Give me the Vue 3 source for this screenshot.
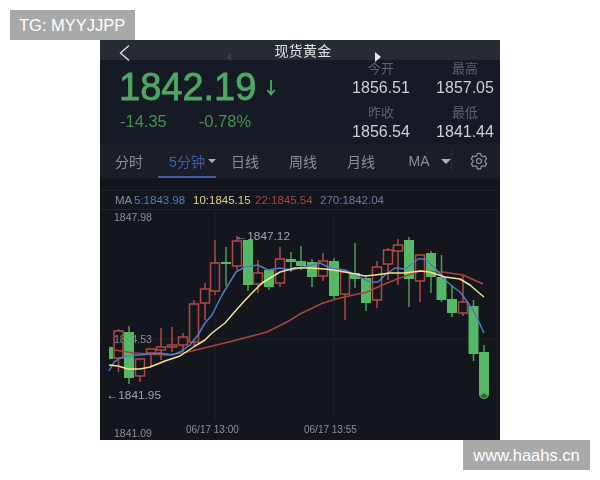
<script setup>
const tabs = ['分时', '5分钟', '日线', '周线', '月线', 'MA']

const stats = [
  { label: '今开', value: '1856.51' },
  { label: '最高', value: '1857.05' },
  { label: '昨收', value: '1856.54' },
  { label: '最低', value: '1841.44' }
]

// x, body top, body bottom, wick top, wick bottom, up?
const candles = [
  [118.5, 331, 358, 329, 372, true],
  [129, 332, 378, 326, 384, false],
  [140, 359, 376, 359, 382, true],
  [151, 349, 353, 349, 366, true],
  [161, 347, 350, 328, 360, true],
  [172, 345, 347, 327, 352, true],
  [183, 337, 345, 333, 352, true],
  [194, 304, 342, 300, 346, true],
  [205, 289, 303, 283, 320, true],
  [215, 263, 291, 240, 295, true],
  [226, 262, 264, 247, 286, false],
  [237, 241, 266, 236, 270, true],
  [248, 240, 285, 240, 291, false],
  [258, 273, 284, 260, 293, true],
  [269, 270, 287, 270, 290, false],
  [280, 259, 283, 247, 287, true],
  [291, 259, 262, 252, 272, false],
  [301, 261, 266, 246, 270, false],
  [312, 262, 277, 259, 287, false],
  [323, 261, 276, 253, 281, true],
  [334, 261, 296, 258, 299, false],
  [345, 272, 294, 270, 320, true],
  [355, 273, 279, 243, 288, false],
  [366, 278, 303, 277, 311, false],
  [377, 267, 300, 261, 308, true],
  [388, 250, 264, 248, 280, true],
  [398, 245, 251, 239, 285, true],
  [409, 240, 279, 237, 307, false],
  [420, 255, 281, 255, 302, true],
  [431, 253, 277, 251, 293, false],
  [441.5, 277, 300, 255, 302, false],
  [452, 299, 313, 285, 317, false],
  [463, 302, 313, 275, 316, true],
  [473.5, 306, 354, 300, 361, false],
  [484, 352, 394, 345, 394, false]
].map(([x, top, bottom, high, low, up]) => ({ x, top, bottom, high, low, up }))

const ma5 = '109,371 114,362 120,358 128,356 140,355 150,354 160,353 172,355 180,352 190,345 198,335 205,323 212,315 222,295 236,272 245,267 258,265 268,270 280,268 291,270 300,268 320,263 330,268 345,270 355,275 370,282 378,282 385,275 395,268 405,269 418,259 425,259 435,268 445,280 452,286 460,292 466,300 473,310 478,320 484,333'
const ma10 = '109,365 118,366 128,369 140,369 150,367 165,361 180,356 195,346 205,340 212,333 225,323 238,308 250,295 262,283 280,272 295,268 310,268 325,269 340,271 350,273 365,276 375,275 390,273 405,273 420,271 430,272 445,277 460,279 470,285 478,292 484,297'
const ma22 = '115,350 133,353 167,355 183,353 200,349 233,341 267,332 287,322 300,314 323,303 340,298 367,292 387,283 400,278 420,271 443,272 463,275 483,284'
</script>

<template>
  <div class="page">
    <div class="tag tag-top">TG: MYYJJPP</div>

    <div class="shot">
      <header class="title-bar">
        <svg class="back" width="14" height="18" viewBox="0 0 14 18">
          <path d="M12 1.5 3.5 9l8.5 7.5" fill="none" stroke="#d8dade" stroke-width="1.4" />
        </svg>
        <span class="title">现货黄金</span>
        <i class="pointer pointer-dim"></i>
        <i class="pointer pointer-light"></i>
      </header>

      <section class="quote">
        <div class="price-block">
          <div class="price-row">
            <span class="price">1842.19</span>
            <svg width="10" height="17" viewBox="0 0 10 17">
              <path d="M5 1v14M1.500 11 5 15.500 8.500 11" fill="none" stroke="#4fa761" stroke-width="1.800" />
            </svg>
          </div>
          <div class="change-row">
            <span>-14.35</span>
            <span>-0.78%</span>
          </div>
        </div>
        <div class="stats">
          <div v-for="s in stats" :key="s.label" class="stat">
            <span class="stat-label">{{ s.label }}</span>
            <span class="stat-value">{{ s.value }}</span>
          </div>
        </div>
      </section>

      <nav class="tabs">
        <div
          v-for="(t, i) in tabs"
          :key="t"
          :class="['tab', { active: i === 1 }]">
          {{ t }}
          <i v-if="i === 1 || i === 5" class="caret"></i>
        </div>
        <div class="gear">
          <svg width="18" height="18" viewBox="0 0 18 18">
            <path d="M7.300 1.500h3.400l.5 2.200 1.600.9 2.200-.7 1.700 2.900-1.700 1.500v1.800l1.700 1.500-1.700 2.900-2.200-.7-1.600.9-.5 2.200H7.300l-.5-2.200-1.600-.9-2.200.7-1.700-2.900 1.700-1.500V8.300L1.300 6.800 3 3.900l2.200.7 1.600-.9z" fill="none" stroke="#9a9ea6" stroke-width="1.100" stroke-linejoin="round" />
            <circle cx="9" cy="9" r="2.500" fill="none" stroke="#9a9ea6" stroke-width="1.100" />
          </svg>
        </div>
      </nav>

      <section class="chart">
        <div class="legend">
          <span class="legend-ma">MA</span>
          <span class="legend-5">5:1843.98</span>
          <span class="legend-10">10:1845.15</span>
          <span class="legend-22">22:1845.54</span>
          <span class="legend-270">270:1842.04</span>
        </div>
        <svg class="plot" width="400" height="230" viewBox="100 210 400 230">
          <path d="M110 339H497M215 212V420M334 212V420" stroke="#1f2229" stroke-width="1" fill="none" />
          <path d="M497.500 190V440" stroke="#1e2128" fill="none" />

          <text x="114" y="221" class="axis">1847.98</text>
          <text x="114" y="343" class="axis">1844.53</text>
          <text x="114" y="437" class="axis">1841.09</text>
          <text x="186" y="433" class="axis small">06/17 13:00</text>
          <text x="304" y="433" class="axis small">06/17 13:55</text>

          <rect x="109" y="347" width="4" height="12" fill="#53b665" />
          <g v-for="c in candles" :key="c.x">
            <template v-if="c.up">
              <path :d="`M${c.x} ${c.high}V${c.top}M${c.x} ${c.bottom}V${c.low}`" stroke="#b04a46" stroke-width="1.500" />
              <rect :x="c.x - 4.500" :y="c.top" width="9" :height="c.bottom - c.top" fill="none" stroke="#b04a46" stroke-width="1.500" />
            </template>
            <template v-else>
              <path :d="`M${c.x} ${c.high}V${c.low}`" stroke="#4a9c5c" stroke-width="1.500" />
              <rect :x="c.x - 5" :y="c.top" width="10" :height="c.bottom - c.top" fill="#54b866" />
            </template>
          </g>
          <circle cx="484" cy="394" r="5" fill="#54b866" />
          <path d="M480 396a5 5 0 0 0 8 0l-4-3z" fill="#2f6a3c" />

          <polyline :points="ma22" class="line" stroke="#a84442" />
          <polyline :points="ma5" class="line" stroke="#4f7cc4" />
          <polyline :points="ma10" class="line" stroke="#f0e492" />

          <text x="235.500" y="240" class="mark">←1847.12</text>
          <text x="106.500" y="399" class="mark">←1841.95</text>
        </svg>
      </section>
    </div>

    <div class="tag tag-bottom">www.haahs.cn</div>
  </div>
</template>

<style scoped>
.page {
  position: relative;
  width: 600px;
  height: 480px;
  padding: 40px 100px;
  box-sizing: border-box;
  background: #fff;
  overflow: hidden;
  font-family: "Liberation Sans", "Noto Sans CJK SC", sans-serif;
}

.tag {
  position: absolute;
  background: #a9a9a9;
  color: #fff;
  font-size: 16.500px;
  line-height: 30px;
}

.tag-top {
  left: 10px;
  top: 10px;
  width: 125px;
  padding-left: 9px;
  box-sizing: border-box;
}

.tag-bottom {
  left: 463px;
  top: 440px;
  width: 127px;
  text-align: center;
}

.shot {
  display: flex;
  flex-direction: column;
  width: 400px;
  height: 400px;
  background: #14161d;
  overflow: hidden;
  filter: blur(0.4px);
}

.title-bar {
  position: relative;
  display: flex;
  align-items: center;
  justify-content: center;
  height: 20px;
  flex: none;
  background: #272b34;
}

.back {
  position: absolute;
  left: 17px;
  top: 4px;
}

.title {
  margin-left: 6px;
  margin-top: -1px;
  color: #e2e3e6;
  font-size: 14px;
  letter-spacing: 0.300px;
}

.pointer {
  position: absolute;
  top: 13px;
  border-style: solid;
  border-color: transparent;
  border-width: 5px 0 5px 6px;
}

.pointer-dim {
  left: 126px;
  border-width: 4px 5px 4px 0;
  border-right-color: #3b3f47;
}

.pointer-light {
  left: 275px;
  top: 12px;
  border-left-color: #e6e7ea;
}

.quote {
  display: flex;
  justify-content: space-between;
  height: 84px;
  flex: none;
  background: #151a24;
  box-sizing: border-box;
  padding: 5px 0 0 19px;
}

.price-row {
  display: flex;
  align-items: center;
  gap: 10px;
  height: 44px;
}

.price {
  color: #4fa761;
  font-size: 38px;
  line-height: 44px;
  -webkit-text-stroke: 0.8px #4fa761;
}

.change-row {
  display: flex;
  gap: 32px;
  margin-top: 1px;
  padding-left: 1px;
  color: #478f58;
  font-size: 16.500px;
  line-height: 22px;
}

.stats {
  display: grid;
  grid-template-columns: 70px 70px;
  column-gap: 14px;
  grid-auto-rows: 44px;
  margin-top: -5px;
}

.stat {
  display: flex;
  flex-direction: column;
  align-items: center;
}

.stat-label {
  color: #5c616b;
  font-size: 13px;
  line-height: 18px;
}

.stat-value {
  color: #cdd0d5;
  font-size: 16px;
  line-height: 20px;
}

.tabs {
  position: relative;
  display: flex;
  height: 34px;
  flex: none;
  background: #1b1e27;
  color: #8b8f97;
  font-size: 14px;
}

.tab {
  display: flex;
  align-items: center;
  justify-content: center;
  gap: 3px;
  width: 58px;
  box-sizing: border-box;
}

.tab.active {
  color: #3f5fae;
  border-bottom: 2px solid #3f5aa8;
  padding-top: 2px;
}

.caret {
  display: block;
  margin-left: 8px;
  margin-right: -21px;
  border-style: solid;
  border-color: #aeb1b8 transparent transparent;
  border-width: 5px 5px 0;
}

.tab.active .caret {
  margin-left: 0;
  margin-right: -11px;
  border-width: 4px 4px 0;
}

.gear {
  display: flex;
  align-items: center;
  justify-content: center;
  flex: 1;
  margin: 5px 0 5px 3px;
  border-left: 1px solid #2a2d35;
  padding-left: 5px;
}

.chart {
  flex: 1;
  padding-top: 12px;
}

.legend {
  display: flex;
  align-items: center;
  height: 20px;
  margin-right: 3px;
  border-top: 1px solid #20232b;
  border-bottom: 1px solid #20232b;
  box-sizing: border-box;
  padding-left: 15px;
  font-size: 11.500px;
  white-space: nowrap;
}

.legend-ma { width: 19px; color: #8b8f97; }
.legend-5 { width: 59px; color: #4f7cc4; }
.legend-10 { width: 62px; color: #ddd28c; }
.legend-22 { width: 65px; color: #a84442; }
.legend-270 { color: #6f7c9c; }

.plot {
  display: block;
}

.line {
  fill: none;
  stroke-width: 1.500;
  stroke-linejoin: round;
}

.axis {
  fill: #8b8e95;
  font-size: 10.500px;
}

.axis.small {
  font-size: 10px;
}

.mark {
  fill: #a0a3a9;
  font-size: 11.800px;
}
</style>
